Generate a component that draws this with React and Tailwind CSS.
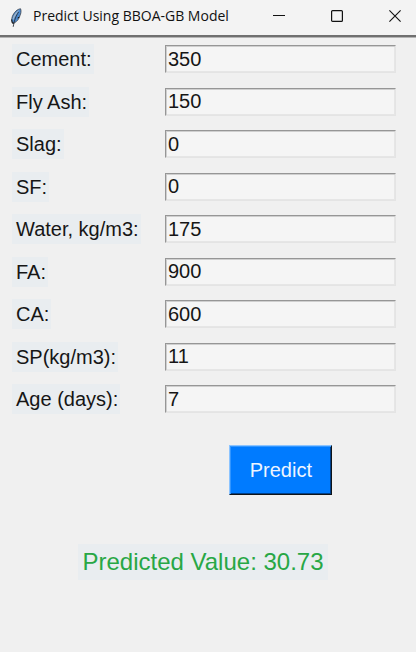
import React from "react";

const fields = [
  { id: "cement", label: "Cement:", value: "350" },
  { id: "fly-ash", label: "Fly Ash:", value: "150" },
  { id: "slag", label: "Slag:", value: "0" },
  { id: "sf", label: "SF:", value: "0" },
  { id: "water", label: "Water, kg/m3:", value: "175" },
  { id: "fa", label: "FA:", value: "900" },
  { id: "ca", label: "CA:", value: "600" },
  { id: "sp", label: "SP(kg/m3):", value: "11" },
  { id: "age", label: "Age (days):", value: "7" },
];

function FeatherIcon() {
  return (
    <svg viewBox="0 0 12 20" className="h-5 w-3 shrink-0" aria-hidden="true">
      <path d="M10.6 0.8C7.6 0.9 4 4.2 2.3 8.6C1.5 11 1.7 13.2 2.3 14.8L4.2 15C7.2 13.4 9.4 10.4 9.9 7.8C10.9 6 11.4 2.8 10.6 0.8Z" fill="#4a8ad0" stroke="#3a3f47" strokeWidth="0.8" />
      <path d="M9.6 1.6C6.6 3 4 6.4 2.6 10.4L3.2 12.2C5 8.4 7 5 9.6 1.6Z" fill="#9fb2c6" />
      <path d="M8.6 4C6.2 7.6 4.4 11.6 3.2 18.8" fill="none" stroke="#2a2f38" strokeWidth="0.9" />
      <path d="M1.6 11.5L2.4 15.2L3.9 15.2M9.2 9.2L7.6 10" fill="none" stroke="#17191d" strokeWidth="1" />
    </svg>
  );
}

function TitleBar() {
  return (
    <header className="flex h-[37px] items-center border-b-2 border-[#707070] bg-[#f3f3f3] pl-2.5 shadow-[0_1px_0_#b4b4b4]">
      <FeatherIcon />
      <h1 className="-mt-1 ml-[11px] flex-1 whitespace-nowrap font-['Open_Sans',sans-serif] text-[14px] leading-5 text-[#111111]">
        Predict Using BBOA-GB Model
      </h1>
      <div className="-mt-1 flex items-center gap-[46px] pr-[15px]">
        <button type="button" aria-label="Minimize">
          <svg viewBox="0 0 12 12" className="size-3" fill="none" stroke="#111111" shapeRendering="crispEdges">
            <path d="M0 5.5H12" />
          </svg>
        </button>
        <button type="button" aria-label="Maximize">
          <svg viewBox="0 0 12 12" className="size-3" fill="none" stroke="#111111">
            <rect x="0.6" y="0.6" width="10.8" height="10.8" rx="1" strokeWidth="1.2" />
          </svg>
        </button>
        <button type="button" aria-label="Close">
          <svg viewBox="0 0 12 12" className="size-3" fill="none" stroke="#111111" strokeWidth="1.1">
            <path d="M0.4 0.4L11.6 11.6M11.6 0.4L0.4 11.6" />
          </svg>
        </button>
      </div>
    </header>
  );
}

export default function App() {
  return (
    <div className="flex min-h-screen flex-col bg-[#f0f0f0] font-['Liberation_Sans',Arial,sans-serif] text-xl text-[#161616]">
      <TitleBar />
      <main className="flex flex-col px-3 pt-[7px]">
        <form className="flex flex-col" onSubmit={(e) => e.preventDefault()}>
          <div className="flex min-h-[370px] flex-col justify-between">
            {fields.map((field) => (
              <div key={field.id} className="flex items-center pr-2">
                <div className="w-[153px] shrink-0">
                  <label htmlFor={field.id} className="inline-block whitespace-nowrap bg-[#e9edf0] pr-0.5 pl-1 align-top leading-[30px]">
                    {field.label}
                  </label>
                </div>
                <input
                  id={field.id}
                  defaultValue={field.value}
                  className="h-7 w-full min-w-0 border border-t-[#969696] border-r-[#e4e4e4] border-b-[#e4e4e4] border-l-[#969696] bg-[#f5f5f5] px-0.5 leading-6 shadow-[inset_1px_1px_0_#cfcfcf,inset_-1px_-1px_0_#e6e6e6] outline-none"
                />
              </div>
            ))}
          </div>
          <button
            type="submit"
            className="mt-[31px] mr-[72px] h-[50px] self-end border border-t-[#8cc4ff] border-r-[#101418] border-b-[#101418] border-l-[#8cc4ff] bg-[#007bff] pr-[19px] pl-5 text-[#eef5ff] shadow-[inset_1px_1px_0_#3396ff,inset_-1px_-1px_0_#00408a]"
          >
            Predict
          </button>
        </form>
        <output className="mt-[49px] mr-2.5 self-center bg-[#e9edf0] px-1 text-2xl leading-9 text-[#28a745]">
          Predicted Value: 30.73
        </output>
      </main>
    </div>
  );
}
